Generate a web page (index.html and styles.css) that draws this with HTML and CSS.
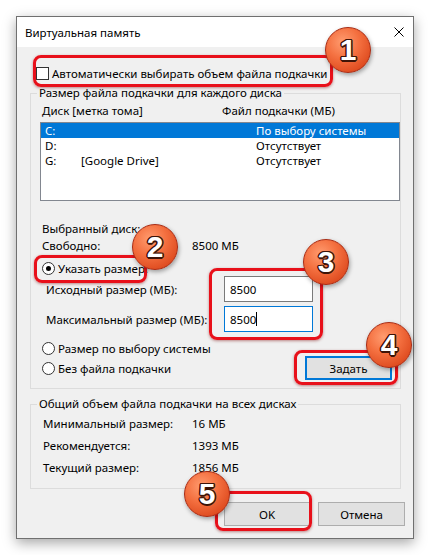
FILE: index.html
```html
<!DOCTYPE html>
<html lang="ru">
  <head>
    <meta charset="UTF-8" />
    <meta name="viewport" content="width=device-width, initial-scale=1.0" />
    <title>Виртуальная память</title>
    <link rel="stylesheet" href="styles.css">
  </head>
  <body>
    <div class="screen">
      <div class="window">
        <div class="titlebar">
          <span class="title">Виртуальная память</span>
          <svg class="close" width="10" height="10" viewBox="0 0 10 10">
            <path d="M0.5 0.5 L9.5 9.5 M9.5 0.5 L0.5 9.5" stroke="#000" stroke-width="1" fill="none" />
          </svg>
        </div>

        <div class="content">
          <!-- Auto size checkbox -->
          <div class="check-row">
            <span class="checkbox"></span>
            <span>Автоматически выбирать объем файла подкачки</span>
          </div>

          <!-- Per-disk settings -->
          <fieldset class="group group-disks">
            <legend>Размер файла подкачки для каждого диска</legend>
            <div class="list-head">
              <span class="col-disk">Диск [метка тома]</span>
              <span>Файл подкачки (МБ)</span>
            </div>
            <div class="listbox">
              <div class="list-row selected">
                <span class="drive">C:</span><span class="volume"></span><span>По выбору системы</span>
              </div>
              <div class="list-row">
                <span class="drive">D:</span><span class="volume"></span><span>Отсутствует</span>
              </div>
              <div class="list-row">
                <span class="drive">G:</span><span class="volume">[Google Drive]</span><span>Отсутствует</span>
              </div>
            </div>

            <div class="info-row first">
              <span>Выбранный диск:</span><span class="near">C:</span>
            </div>
            <div class="info-row">
              <span class="info-key">Свободно:</span><span>8500 МБ</span>
            </div>

            <div class="radio-row custom">
              <span class="radio checked"></span>
              <span>Указать размер:</span>
            </div>
            <div class="size-row">
              <span class="size-label">Исходный размер (МБ):</span>
              <span class="field">8500</span>
            </div>
            <div class="size-row second">
              <span class="size-label">Максимальный размер (МБ):</span>
              <span class="field focused">8500<span class="caret"></span></span>
            </div>

            <div class="radio-row system">
              <span class="radio"></span>
              <span>Размер по выбору системы</span>
            </div>
            <div class="radio-row last">
              <span class="radio"></span>
              <span>Без файла подкачки</span>
              <span class="button default set">Задать</span>
            </div>
          </fieldset>

          <!-- Totals -->
          <fieldset class="group group-total">
            <legend>Общий объем файла подкачки на всех дисках</legend>
            <div class="total-row first">
              <span class="total-key">Минимальный размер:</span><span>16 МБ</span>
            </div>
            <div class="total-row">
              <span class="total-key">Рекомендуется:</span><span>1393 МБ</span>
            </div>
            <div class="total-row">
              <span class="total-key">Текущий размер:</span><span>1856 МБ</span>
            </div>
          </fieldset>

          <div class="actions">
            <span class="button ok">OK</span>
            <span class="button cancel">Отмена</span>
          </div>
        </div>
      </div>

      <!-- Step annotations drawn over the dialog -->
      <div class="mark mark-1"></div>
      <div class="mark mark-2"></div>
      <div class="mark mark-3"></div>
      <div class="mark mark-4"></div>
      <div class="mark mark-5"></div>

      <div class="step step-1">1</div>
      <div class="step step-2">2</div>
      <div class="step step-3">3</div>
      <div class="step step-4">4</div>
      <div class="step step-5">5</div>
    </div>
  </body>
</html>
```

FILE: styles.css
```css
body {
  margin: 0;
  background: #fff;
  font-family: "Noto Sans", "DejaVu Sans", sans-serif;
  font-size: 11.5px;
  color: #000;
}

.screen {
  position: relative;
  width: 428px;
  height: 555px;
  padding-top: 16px;
  box-sizing: border-box;
  overflow: hidden;
}

.window {
  margin-left: 16px;
  width: 396px;
  border: 1px solid #707070;
  background: #f0f0f0;
  box-shadow: 0 4px 12px rgba(0, 0, 0, 0.35);
}

.titlebar {
  height: 30px;
  background: #fff;
  display: flex;
  align-items: center;
  justify-content: space-between;
  padding: 0 9px 0 8px;
}

.close {
  display: block;
}

.content {
  padding: 18px 12px 12px 13px;
}

.check-row {
  display: flex;
  align-items: center;
  height: 16px;
  padding-left: 6px;
  gap: 3px;
}

.checkbox {
  width: 11px;
  height: 11px;
  border: 1px solid #333;
  background: #fff;
}

.group {
  margin: 4px 0 0;
  padding: 0 0 8px;
  border: 1px solid #dcdcdc;
  min-width: 0;
}

.group legend {
  margin-left: 6px;
  padding: 0 2px;
  line-height: 16px;
}

.list-head {
  display: flex;
  height: 16px;
  line-height: 16px;
  margin-top: 2px;
  padding-left: 11px;
}

.col-disk {
  width: 180px;
}

.listbox {
  margin: 3px 0 0 9px;
  height: 77px;
  border: 1px solid #828790;
  background: #fff;
}

.list-row {
  display: flex;
  height: 15px;
  line-height: 15px;
  padding-left: 4px;
}

.list-row.selected {
  background: #0078d7;
  color: #fff;
}

.drive {
  width: 36px;
}

.volume {
  width: 175px;
}

.info-row {
  display: flex;
  height: 17px;
  line-height: 17px;
  padding-left: 11px;
}

.info-row.first {
  margin-top: 19px;
}

.info-key {
  width: 150px;
}

.near {
  margin-left: 12px;
}

.radio-row {
  display: flex;
  align-items: center;
  height: 16px;
  padding-left: 11px;
  gap: 3px;
}

.radio-row.custom {
  margin-top: 6px;
}

.radio-row.system {
  margin-top: 8px;
}

.radio-row.last {
  height: 24px;
}

.radio {
  width: 11px;
  height: 11px;
  border: 1px solid #333;
  border-radius: 50%;
  background: #fff;
  position: relative;
}

.radio.checked::after {
  content: "";
  position: absolute;
  left: 3px;
  top: 3px;
  width: 5px;
  height: 5px;
  border-radius: 50%;
  background: #000;
}

.size-row {
  display: flex;
  align-items: center;
  padding-left: 15px;
}

.size-row.second {
  margin-top: 4px;
}

.size-label {
  width: 178px;
}

.field {
  display: flex;
  align-items: center;
  width: 77px;
  height: 24px;
  padding-left: 5px;
  padding-right: 5px;
  border: 1px solid #7a7a7a;
  background: #fff;
}

.field.focused {
  border-color: #0078d7;
}

.caret {
  display: inline-block;
  width: 1px;
  height: 14px;
  background: #000;
}

.button {
  display: flex;
  align-items: center;
  justify-content: center;
  box-sizing: border-box;
  height: 24px;
  border: 1px solid #adadad;
  background: #e1e1e1;
}

.button.default {
  border: 2px solid #0078d7;
}

.set {
  width: 87px;
  margin-left: auto;
  margin-right: 8px;
}

.group-total {
  margin-top: 7px;
  padding-bottom: 9px;
}

.total-row {
  display: flex;
  height: 22px;
  line-height: 22px;
  padding-left: 12px;
}

.total-row.first {
  margin-top: 1px;
}

.total-key {
  width: 149px;
}

.actions {
  display: flex;
  justify-content: flex-end;
  gap: 8px;
  margin: 13px -4px 0 0;
}

.ok {
  width: 86px;
}

.cancel {
  width: 87px;
}

/* annotations */
.mark {
  position: absolute;
  box-sizing: border-box;
  border: 3px solid #e8101a;
  border-radius: 8px;
  box-shadow: 0 1px 3px rgba(120, 0, 0, 0.45);
}

.mark-1 { left: 33px; top: 55px; width: 300px; height: 32px; }
.mark-2 { left: 34px; top: 255px; width: 113px; height: 28px; }
.mark-3 { left: 209px; top: 268px; width: 114px; height: 72px; }
.mark-4 { left: 294px; top: 350px; width: 104px; height: 35px; }
.mark-5 { left: 215px; top: 491px; width: 97px; height: 40px; }

.step {
  position: absolute;
  width: 46px;
  height: 46px;
  box-sizing: border-box;
  border-radius: 50%;
  border: 1px solid #a82a12;
  background: radial-gradient(circle at 38% 32%, #ff9c70 0%, #f47040 40%, #e04e22 75%, #bd3616 100%);
  box-shadow: 1px 2px 4px rgba(0, 0, 0, 0.35);
  display: flex;
  align-items: center;
  justify-content: center;
  font-family: "Liberation Sans", Arial, sans-serif;
  font-weight: bold;
  font-size: 30px;
  color: #fff;
  text-shadow:
    1.5px 0 0 #3d1408, -1.5px 0 0 #3d1408, 0 1.5px 0 #3d1408, 0 -1.5px 0 #3d1408,
    1px 1px 0 #3d1408, -1px -1px 0 #3d1408, 1px -1px 0 #3d1408, -1px 1px 0 #3d1408;
}

.step-1 { left: 325px; top: 27px; }
.step-2 { left: 132px; top: 224px; }
.step-3 { left: 303px; top: 239px; }
.step-4 { left: 366px; top: 322px; }
.step-5 { left: 184px; top: 471px; }
```
